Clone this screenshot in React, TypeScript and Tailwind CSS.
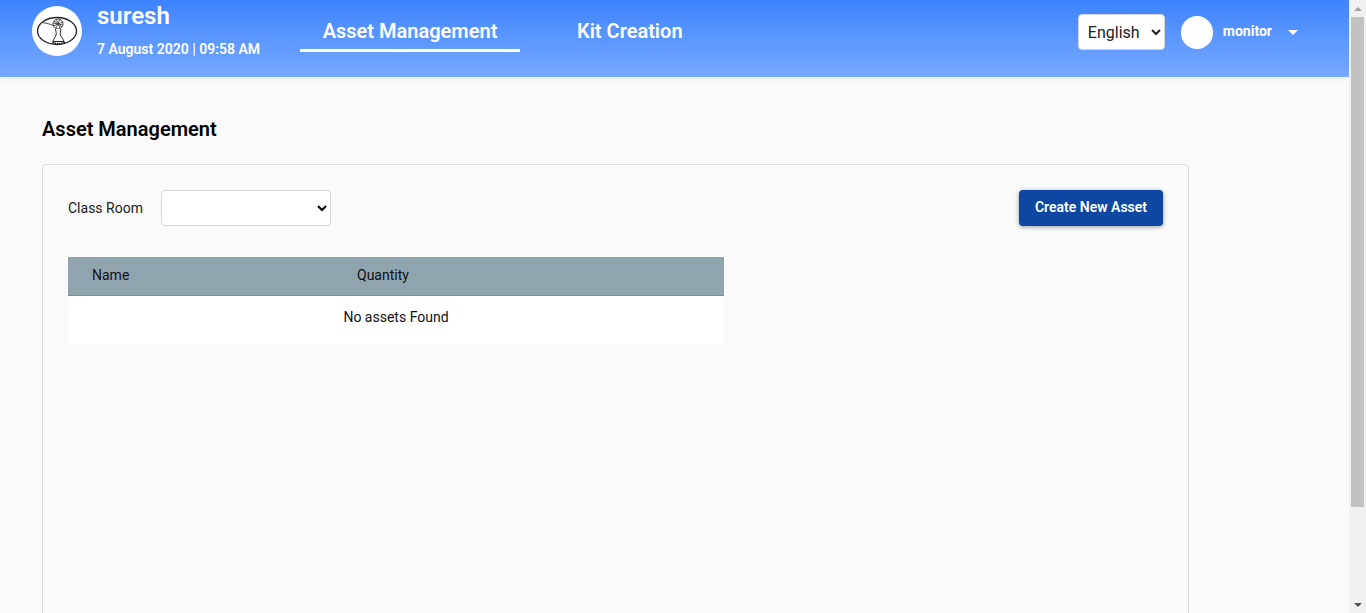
function Logo() {
  return (
    <svg viewBox="0 0 50 50" className="w-[50px] h-[50px] shrink-0">
      <circle cx="25" cy="25" r="25" fill="#fff" />
      <ellipse cx="25" cy="25" rx="19.5" ry="13.5" fill="none" stroke="#222" strokeWidth="1.3" />
      {/* beak */}
      <path d="M10 16.5 C14 17 18 18 21 19.5" stroke="#333" strokeWidth="0.9" fill="none" />
      {/* crest */}
      <circle cx="26" cy="18" r="5" fill="none" stroke="#444" strokeWidth="1" />
      <path d="M22 15 L30 21 M24 13 L28 22 M28 13 L24 22 M31 16 L21 20 M21 17 L31 19" stroke="#444" strokeWidth="0.9" fill="none" />
      {/* body */}
      <path d="M23.5 23 C24 26 24.5 27 24 29 C23.5 31 21.5 33 21 35.5 L32 35.5 C31.5 33 29 31 28.5 29 C28 27 28.5 25 29 23" fill="#fff" stroke="#222" strokeWidth="1" />
      <path d="M20.5 36 C24 38.5 29 38.5 33 36" fill="none" stroke="#222" strokeWidth="2" strokeDasharray="1.5 0.8" />
    </svg>
  );
}

function Scrollbar() {
  return (
    <div className="w-[17px] shrink-0 h-full bg-[#f1f1f1] flex flex-col">
      <div className="h-[17px] flex items-center justify-center">
        <div className="w-0 h-0 border-x-[4px] border-x-transparent border-b-[4px] border-b-[#a3a3a3]" />
      </div>
      <div className="h-[490px] mx-[2px] bg-[#c1c1c1]" />
      <div className="flex-1" />
      <div className="h-[17px] flex items-center justify-center">
        <div className="w-0 h-0 border-x-[4px] border-x-transparent border-t-[4px] border-t-[#505050]" />
      </div>
    </div>
  );
}

function Header() {
  return (
    <header className="h-[77px] shrink-0 bg-gradient-to-b from-[#3d83ff] to-[#76a9ff] shadow-[0_2px_6px_rgba(0,0,0,0.06)] flex items-start text-white">
      <div className="ml-[32px] mt-[6px]">
        <Logo />
      </div>
      <div className="ml-[15px] w-[203px]">
        <div className="text-[24px] leading-[27px] mt-[3px] font-semibold">suresh</div>
        <div className="text-[14px] leading-[16px] mt-[11px] font-semibold whitespace-nowrap">7 August 2020 | 09:58 AM</div>
      </div>
      <nav className="flex text-[20px] font-semibold">
        <div className="w-[220px] h-[52px] flex items-center justify-center pt-[12px] border-b-[3px] border-white">Asset Management</div>
        <div className="ml-[57px] h-[52px] pt-[10px] flex items-center">Kit Creation</div>
      </nav>
      <div className="ml-auto mr-[51px] mt-[14px] flex items-start">
        <select className="w-[87px] h-[36px] bg-white text-[#212121] text-[16px] border border-[#d4d4d4] rounded-[4px] pl-[5px]" defaultValue="English">
          <option>English</option>
        </select>
        <div className="w-[32px] h-[33px] ml-[16px] mt-[2px] rounded-full bg-white" />
        <div className="ml-[10px] mt-[8px] text-[14px] leading-[18px] font-bold">monitor</div>
        <div className="ml-[16px] mt-[16px] w-0 h-0 border-x-[5px] border-x-transparent border-t-[5px] border-t-white" />
      </div>
    </header>
  );
}

function Toolbar() {
  return (
    <div className="flex items-center justify-between">
      <div className="flex items-center">
        <span className="text-[14px] text-[#212121] w-[93px]">Class Room</span>
        <select className="w-[170px] h-[36px] bg-white border border-[#d8d8d8] rounded-[4px]" />
      </div>
      <button className="w-[144px] h-[36px] pb-[2px] bg-[#0d47a1] text-white text-[14px] font-semibold rounded-[4px] shadow-[0_1px_4px_rgba(0,0,0,0.4)]">
        Create New Asset
      </button>
    </div>
  );
}

function AssetTable() {
  return (
    <div className="w-[656px] mt-[31px] text-[14px] text-[#111]">
      <div className="h-[39px] pb-[2px] bg-[#90a4ae] border-b border-[#78909c] flex items-center">
        <span className="ml-[24px] w-[265px]">Name</span>
        <span>Quantity</span>
      </div>
      <div className="h-[48px] bg-white flex items-center justify-center pb-[6px]">No assets Found</div>
    </div>
  );
}

export default function App() {
  return (
    <div className="h-[613px] overflow-hidden flex bg-[#fafafa] font-['Roboto',sans-serif]">
      <div className="flex-1 min-w-0 flex flex-col">
        <Header />
        <main className="flex-1 min-h-0 pl-[42px] pr-[160px] overflow-hidden">
          <h1 className="mt-[40px] text-[20px] leading-[24px] font-semibold text-black">Asset Management</h1>
          <section className="mt-[23px] h-[600px] border border-[#dcdcdc] rounded-[4px] px-[25px] pt-[25px]">
            <Toolbar />
            <AssetTable />
          </section>
        </main>
      </div>
      <Scrollbar />
    </div>
  );
}
